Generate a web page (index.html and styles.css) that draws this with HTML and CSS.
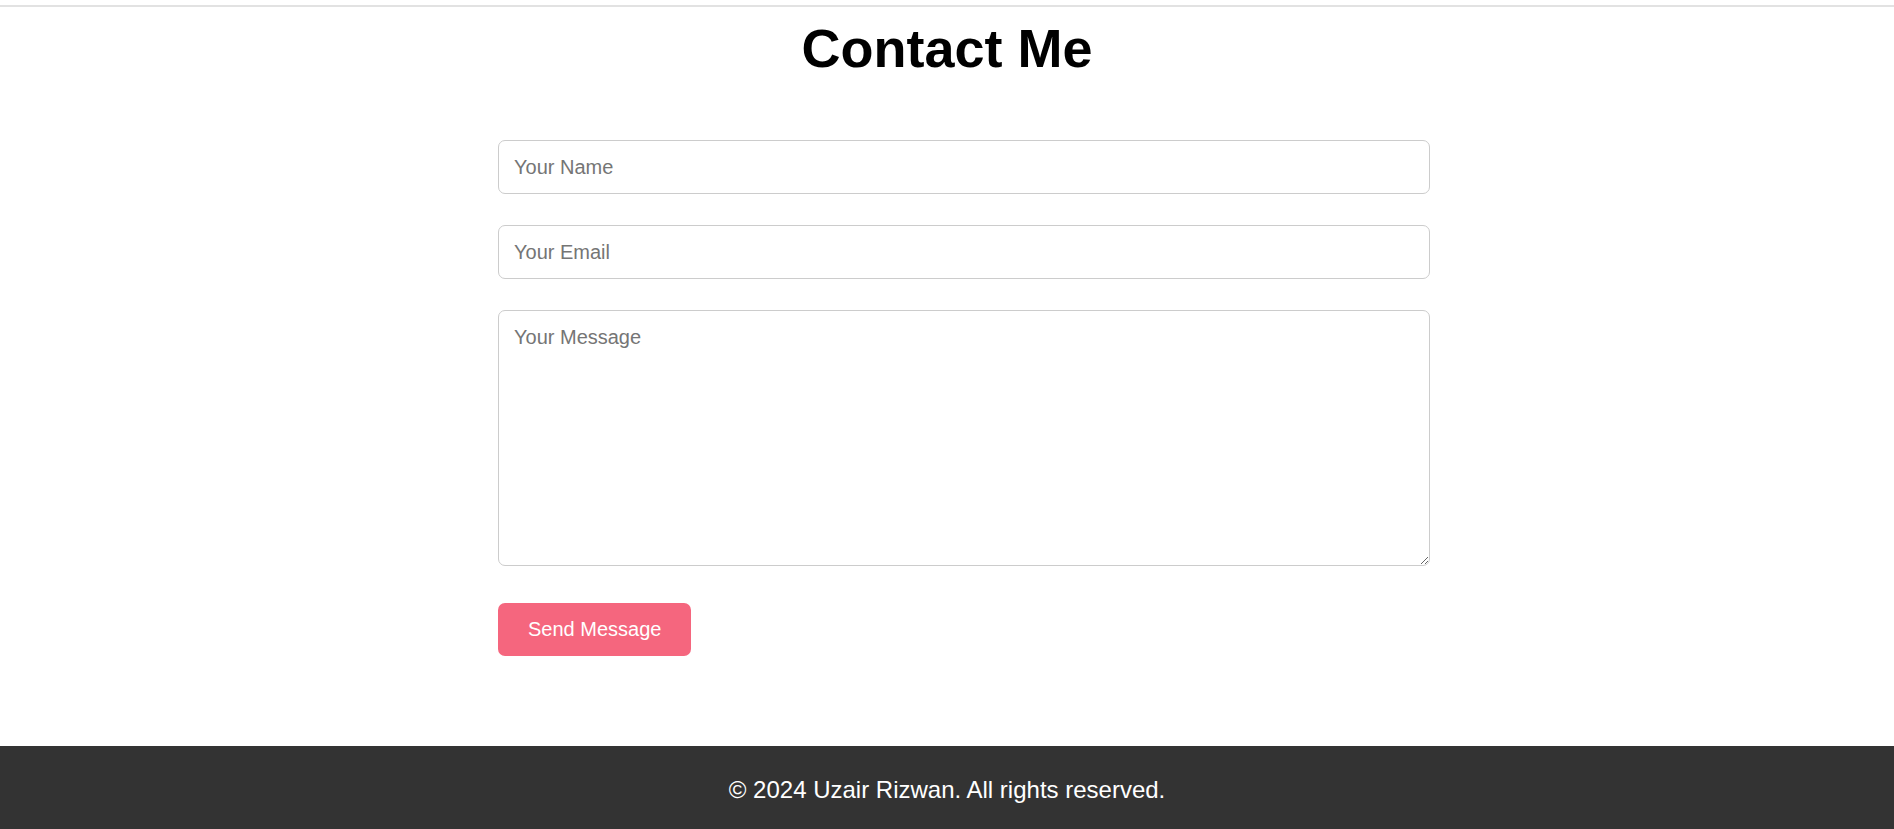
FILE: index.html
```html
<!DOCTYPE html>
<html lang="en">
<head>
<meta charset="utf-8">
<title>Contact Me</title>
<link rel="stylesheet" href="styles.css">
</head>
<body>
<div class="topbar"></div>
<section class="contact">
  <h1 class="contact-title">Contact Me</h1>
  <form class="contact-form">
    <input class="field" type="text" placeholder="Your Name">
    <input class="field" type="email" placeholder="Your Email">
    <textarea class="field field-message" placeholder="Your Message"></textarea>
    <button class="send-btn" type="button">Send Message</button>
  </form>
</section>
<footer class="site-footer">
  <p class="footer-text">© 2024 Uzair Rizwan. All rights reserved.</p>
</footer>
</body>
</html>
```
FILE: styles.css
```css
html, body {
  margin: 0;
  padding: 0;
  background: #fff;
  font-family: "Liberation Sans", Arial, sans-serif;
}
.topbar {
  height: 5px;
  border-bottom: 2px solid #e2e2e2;
}
.contact {
  padding: 10px 0 90px;
}
.contact-title {
  margin: 0 0 61px;
  text-align: center;
  font-size: 54px;
  font-weight: bold;
  color: #000;
}
.contact-form {
  width: 900px;
  padding-left: 2px;
  margin: 0 auto;
  display: flex;
  flex-direction: column;
  align-items: flex-start;
}
.field {
  display: block;
  width: 932px;
  box-sizing: border-box;
  height: 54px;
  padding: 15px;
  margin: 0 0 31px;
  border: 1px solid #ccc;
  border-radius: 7px;
  font-family: "Liberation Sans", Arial, sans-serif;
  font-size: 20px;
  color: #222;
  background: #fff;
}
.field::placeholder {
  color: #757575;
}
.field-message {
  height: 256px;
  margin-bottom: 37px;
  resize: vertical;
}
.send-btn {
  height: 53px;
  padding: 0 30px;
  border: none;
  border-radius: 7px;
  background: #f5667e;
  color: #fff;
  font-family: "Liberation Sans", Arial, sans-serif;
  font-size: 20px;
  cursor: pointer;
}
.site-footer {
  background: #333;
  color: #fff;
  padding: 30px 0;
  text-align: center;
}
.footer-text {
  margin: 0;
  font-size: 24px;
}
```
